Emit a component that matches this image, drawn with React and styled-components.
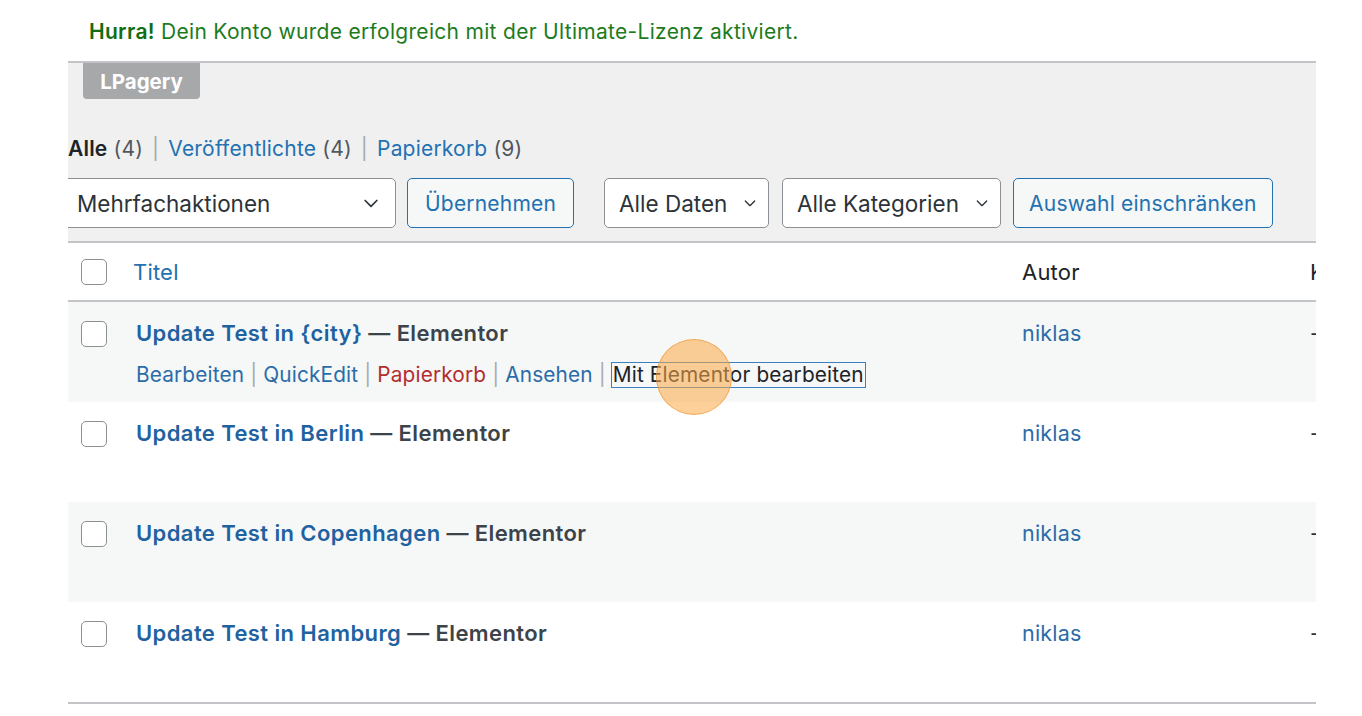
import React from "react";
import styled, { createGlobalStyle } from "styled-components";

const Global = createGlobalStyle`
  html, body { margin: 0; padding: 0; background: #fff; }
  body { font-family: Inter, "Noto Sans", "Liberation Sans", sans-serif; -webkit-font-smoothing: antialiased; }
  * { box-sizing: border-box; }
`;

const Page = styled.div`
  width: 1362px;
  height: 716px;
  overflow: hidden;
  background: #fff;
  padding-left: 68px;
`;

const Content = styled.div`
  width: 1248px;
  overflow: hidden;
  position: relative;
`;

const Notice = styled.div`
  height: 61px;
  padding: 23px 0 0 21px;
`;

const NoticeClip = styled.div`
  height: 38px;
  overflow: hidden;
`;

const NoticeText = styled.div`
  margin-top: -4px;
  font-size: 21px;
  letter-spacing: 0.3px;
  line-height: 26px;
  color: #1d7b1d;
  white-space: nowrap;
  b { font-weight: 600; color: #0f6e12; }
`;

const Panel = styled.div`
  background: #f0f0f1;
  border-top: 2px solid #c3c4c7;
  height: 180px;
  display: flex;
  flex-direction: column;
  align-items: flex-start;
`;

const Tab = styled.div`
  margin-left: 15px;
  height: 36px;
  width: 117px;
  background: #a7a8aa;
  color: #fff;
  font-weight: 700;
  font-size: 20.5px;
  display: flex;
  align-items: center;
  justify-content: center;
  border-radius: 0 0 4px 4px;
`;

const SubNav = styled.div`
  margin-top: 37px;
  font-size: 21px;
  letter-spacing: 0.2px;
  line-height: 26px;
  color: #50575e;
  white-space: nowrap;
  b { color: #1d2327; font-weight: 600; }
  a { color: #2271b1; text-decoration: none; }
`;

const Sep = styled.span`
  color: #a7aaad;
  margin: 0 9px;
`;

const Toolbar = styled.div`
  margin-top: 16px;
  display: flex;
  align-items: center;
  height: 50px;
`;

const Select = styled.div`
  height: 50px;
  width: ${(p) => p.$w}px;
  margin-left: ${(p) => p.$ml || 0}px;
  background: #fff;
  border: 1.5px solid #8c8f94;
  border-radius: 5px;
  display: flex;
  align-items: center;
  justify-content: space-between;
  padding: 0 ${(p) => p.$pr || 12}px 0 ${(p) => p.$pl || 13}px;
  font-size: 22.5px;
  color: #2c3338;
  white-space: nowrap;
`;

const Button = styled.div`
  height: 50px;
  margin-left: ${(p) => p.$ml || 0}px;
  padding: 0 ${(p) => p.$px || 17}px;
  background: #f6f7f7;
  border: 1.5px solid #2271b1;
  border-radius: 5px;
  display: flex;
  align-items: center;
  font-size: 21px;
  letter-spacing: 0.2px;
  color: #2271b1;
  white-space: nowrap;
`;

const Table = styled.div`
  border-top: 2px solid #c3c4c7;
  border-bottom: 2px solid #c3c4c7;
`;

const Row = styled.div`
  display: grid;
  grid-template-columns: 56px 886px 288px 1fr;
  height: ${(p) => (p.$head ? 59 : 100)}px;
  background: ${(p) => (p.$alt ? "#f6f7f7" : "#fff")};
  border-bottom: ${(p) => (p.$head ? "2px solid #c3c4c7" : "none")};
  align-items: ${(p) => (p.$head ? "center" : "start")};
`;

const CheckCell = styled.div`
  padding-left: 13px;
  padding-top: ${(p) => (p.$head ? 0 : 19)}px;
  display: flex;
  align-items: center;
`;

const Box = styled.span`
  width: 26px;
  height: 26px;
  border: 1.5px solid #8c8f94;
  border-radius: 5px;
  background: #fff;
  display: inline-block;
`;

const Cell = styled.div`
  padding-left: ${(p) => p.$pl ?? 12}px;
  padding-top: ${(p) => (p.$head ? 0 : 18)}px;
  font-size: ${(p) => (p.$head ? 22 : 21.5)}px;
  letter-spacing: 0.2px;
  line-height: 26px;
  color: ${(p) => p.$color || "#2c3338"};
  white-space: nowrap;
  overflow: ${(p) => (p.$clip ? "hidden" : "visible")};
  position: relative;
`;

const Title = styled.div`
  font-size: 22px;
  letter-spacing: 0.4px;
  line-height: 26px;
  font-weight: 600;
  color: #3c434a;
  white-space: nowrap;
  a { color: #1f62a0; text-decoration: none; }
`;

const Actions = styled.div`
  margin-top: 17px;
  font-size: 20.8px;
  letter-spacing: 0.15px;
  line-height: 24px;
  color: #2271b1;
  white-space: nowrap;
  display: flex;
  align-items: center;
`;

const ActSep = styled.span`
  color: #a7aaad;
  margin: 0 6px;
`;

const Act = styled.span`
  color: ${(p) => (p.$danger ? "#b32d2e" : "#2a6ca8")};
`;

const Focused = styled.span`
  color: #1d2327;
  outline: 1.5px solid #3b7fc0;
  padding: 0 1px;
  position: relative;
`;

const Cursor = styled.span`
  position: absolute;
  left: 44px;
  top: -24px;
  width: 76px;
  height: 76px;
  border-radius: 50%;
  background: rgba(252, 170, 70, 0.55);
  border: 1.5px solid rgba(240, 150, 50, 0.7);
  pointer-events: none;
`;

const Chevron = ({ size = 16 }) => (
  <svg width={size} height={size} viewBox="0 0 24 24" fill="none" stroke="#2c3338" strokeWidth="2" strokeLinecap="round" strokeLinejoin="round">
    <path d="M5 9l7 7 7-7" />
  </svg>
);

const posts = [
  { city: "{city}", alt: true, actions: true },
  { city: "Berlin" },
  { city: "Copenhagen", alt: true },
  { city: "Hamburg" },
];

export default function App() {
  return (
    <Page>
      <Global />
      <Content>
        <Notice>
          <NoticeClip>
            <NoticeText>
              <b>Hurra!</b> Dein Konto wurde erfolgreich mit der Ultimate-Lizenz aktiviert.
            </NoticeText>
          </NoticeClip>
        </Notice>
        <Panel>
          <Tab>LPagery</Tab>
          <SubNav>
            <b>Alle</b> (4)<Sep>|</Sep><a>Veröffentlichte</a> (4)<Sep>|</Sep><a>Papierkorb</a> (9)
          </SubNav>
          <Toolbar>
            <Select $w={338} $ml={-10} $pl={18} $pr={14}>
              Mehrfachaktionen <Chevron size={20} />
            </Select>
            <Button $ml={11}>Übernehmen</Button>
            <Select $w={165} $ml={30} $pl={14} $pr={10}>
              Alle Daten <Chevron size={16} />
            </Select>
            <Select $w={219} $ml={13} $pl={14} $pr={10}>
              Alle Kategorien <Chevron size={16} />
            </Select>
            <Button $ml={12} $px={15}>Auswahl einschränken</Button>
          </Toolbar>
        </Panel>
        <Table>
          <Row $head>
            <CheckCell $head><Box /></CheckCell>
            <Cell $head $pl={9} $color="#2271b1">Titel</Cell>
            <Cell $head $color="#1d2327">Autor</Cell>
            <Cell $head $clip $color="#1d2327">K</Cell>
          </Row>
          {posts.map((p) => (
            <Row key={p.city} $alt={p.alt}>
              <CheckCell><Box /></CheckCell>
              <Cell>
                <Title>
                  <a>Update Test in {p.city}</a> — Elementor
                </Title>
                {p.actions && (
                  <Actions>
                    <Act>Bearbeiten</Act>
                    <ActSep>|</ActSep>
                    <Act>QuickEdit</Act>
                    <ActSep>|</ActSep>
                    <Act $danger>Papierkorb</Act>
                    <ActSep>|</ActSep>
                    <Act>Ansehen</Act>
                    <ActSep>|</ActSep>
                    <Focused>
                      Mit Elementor bearbeiten
                      <Cursor />
                    </Focused>
                  </Actions>
                )}
              </Cell>
              <Cell $color="#2a6ca8">niklas</Cell>
              <Cell $clip>-</Cell>
            </Row>
          ))}
        </Table>
      </Content>
    </Page>
  );
}
